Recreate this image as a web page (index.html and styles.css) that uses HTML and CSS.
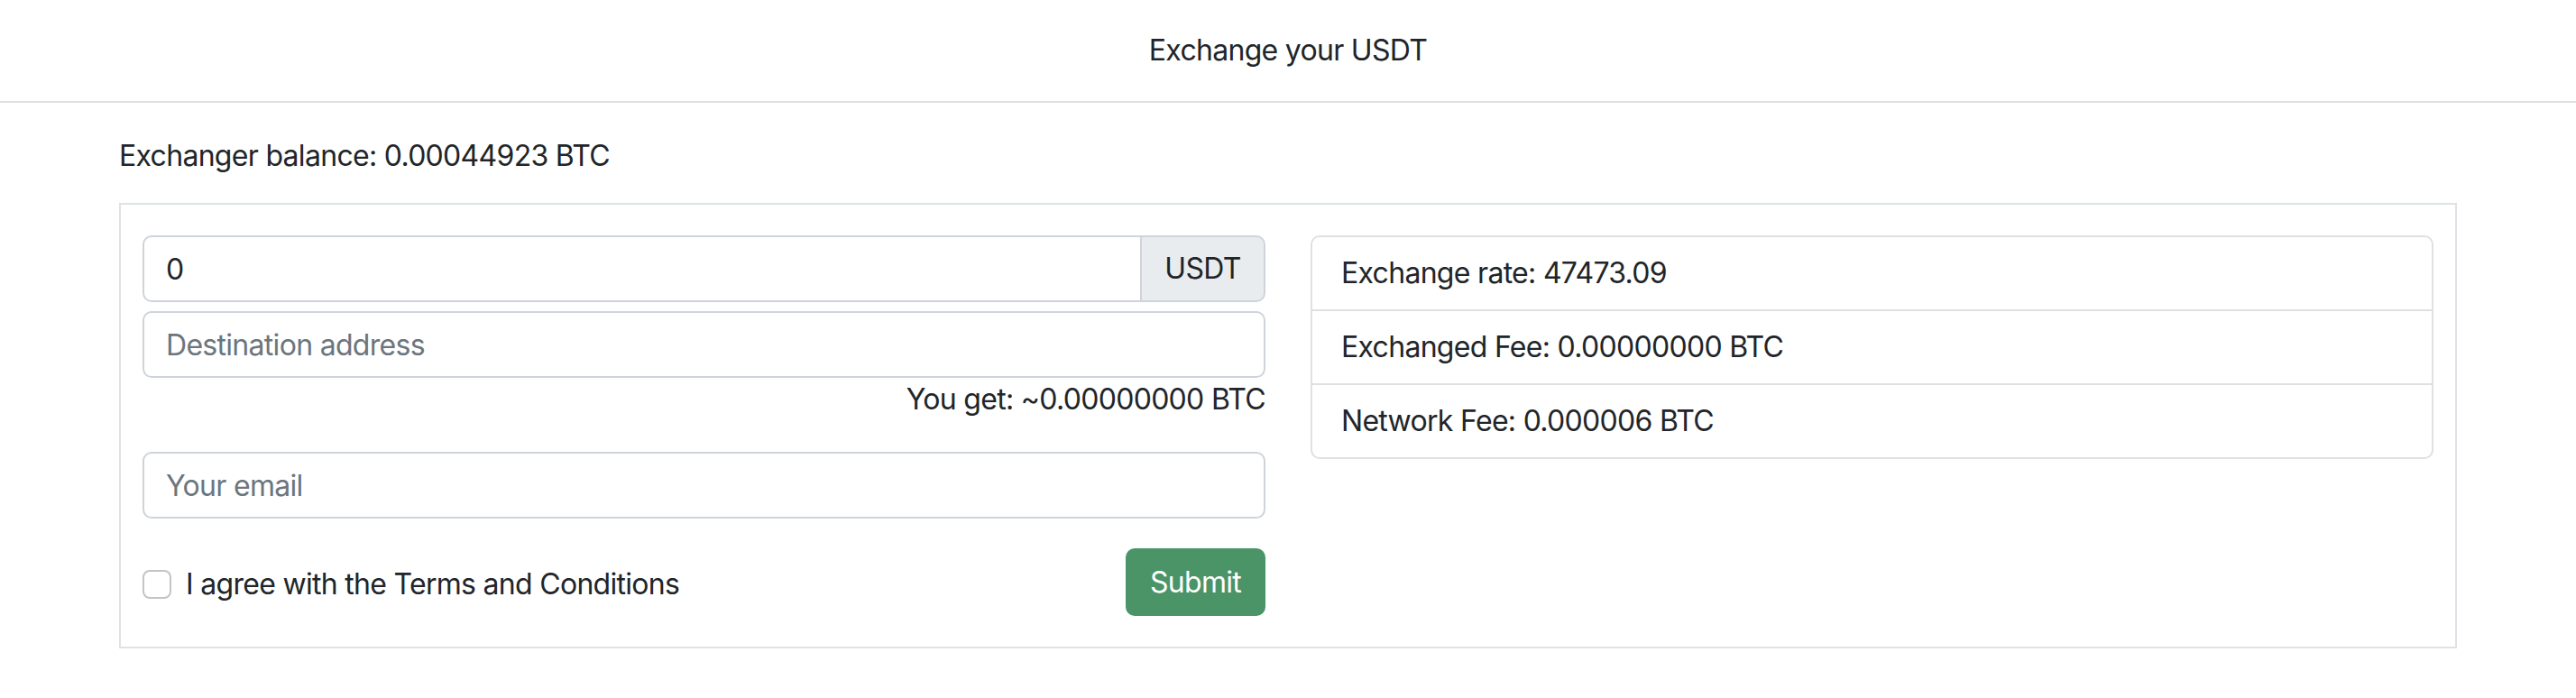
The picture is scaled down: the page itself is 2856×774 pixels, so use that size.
FILE: index.html
```html
<!DOCTYPE html>
<html lang="en">
<head>
<meta charset="utf-8">
<title>Exchange your USDT</title>
<link rel="stylesheet" href="styles.css">
</head>
<body>
<header class="topbar">
  <span class="topbar-title">Exchange your USDT</span>
</header>
<main class="container">
  <p class="balance">Exchanger balance: 0.00044923 BTC</p>
  <section class="panel">
    <form class="form-col">
      <div class="input-group">
        <input class="field field-amount" type="text" value="0">
        <span class="addon">USDT</span>
      </div>
      <input class="field field-addr" type="text" placeholder="Destination address">
      <div class="you-get">You get: ~0.00000000 BTC</div>
      <input class="field field-email" type="email" placeholder="Your email">
      <div class="actions">
        <label class="check">
          <input class="check-input" type="checkbox">
          <span class="check-label">I agree with the Terms and Conditions</span>
        </label>
        <button class="submit" type="button">Submit</button>
      </div>
    </form>
    <ul class="info">
      <li class="info-item">Exchange rate: 47473.09</li>
      <li class="info-item">Exchanged Fee: 0.00000000 BTC</li>
      <li class="info-item">Network Fee: 0.000006 BTC</li>
    </ul>
  </section>
</main>
</body>
</html>
```

FILE: styles.css
```css
* {
  box-sizing: border-box;
}

html, body {
  margin: 0;
  padding: 0;
  background: #ffffff;
}

body {
  font-family: Inter, "Liberation Sans", Arial, sans-serif;
  font-size: 32px;
  line-height: 48px;
  color: #212529;
  letter-spacing: -0.7px;
}

.topbar {
  height: 114px;
  border-bottom: 2px solid #dee0e2;
  display: flex;
  align-items: center;
  justify-content: center;
}

.topbar-title {
  font-size: 32px;
  line-height: 48px;
}

.container {
  width: 2592px;
  margin: 0 auto;
}

.balance {
  margin: 35px 0 28px;
  line-height: 48px;
}

.panel {
  border: 2px solid #dee2e6;
  padding: 34px 24px;
  display: grid;
  grid-template-columns: 1fr 1fr;
  column-gap: 50px;
  align-items: start;
}

.form-col {
  display: flex;
  flex-direction: column;
  margin: 0;
}

.field {
  font-family: inherit;
  font-size: 32px;
  letter-spacing: -0.7px;
  color: #212529;
  height: 74px;
  padding: 0 24px;
  border: 2px solid #ced4da;
  border-radius: 10px;
  background: #fff;
  outline: none;
  width: 100%;
}

.field::placeholder {
  color: #6c757d;
  opacity: 1;
}

.input-group {
  display: flex;
  height: 74px;
}

.field-amount {
  flex: 1;
  border-top-right-radius: 0;
  border-bottom-right-radius: 0;
}

.addon {
  display: flex;
  align-items: center;
  padding: 0 24px;
  background: #e9ecef;
  border: 2px solid #ced4da;
  border-left: none;
  border-radius: 0 10px 10px 0;
  width: 137px;
  justify-content: center;
}

.field-addr {
  margin-top: 10px;
}

.you-get {
  text-align: right;
  line-height: 48px;
}

.field-email {
  margin-top: 34px;
}

.actions {
  margin-top: 33px;
  height: 75px;
  display: flex;
  align-items: center;
  justify-content: space-between;
}

.check {
  display: flex;
  align-items: center;
  gap: 16px;
  padding-top: 4px;
}

.check-input {
  appearance: none;
  -webkit-appearance: none;
  width: 32px;
  height: 32px;
  margin: 0;
  border: 2px solid #c4c4c4;
  border-radius: 8px;
  background: #fff;
}

.submit {
  font-family: inherit;
  font-size: 32px;
  letter-spacing: -0.7px;
  color: #ffffff;
  background: #4a9468;
  border: 2px solid #4a9468;
  border-radius: 10px;
  height: 75px;
  width: 155px;
  padding: 0;
}

.info {
  list-style: none;
  margin: 0;
  padding: 0;
  border: 2px solid #e0e0e0;
  border-radius: 10px;
}

.info-item {
  padding: 16px 32px;
  line-height: 48px;
}

.info-item + .info-item {
  border-top: 2px solid #e0e0e0;
}
```
